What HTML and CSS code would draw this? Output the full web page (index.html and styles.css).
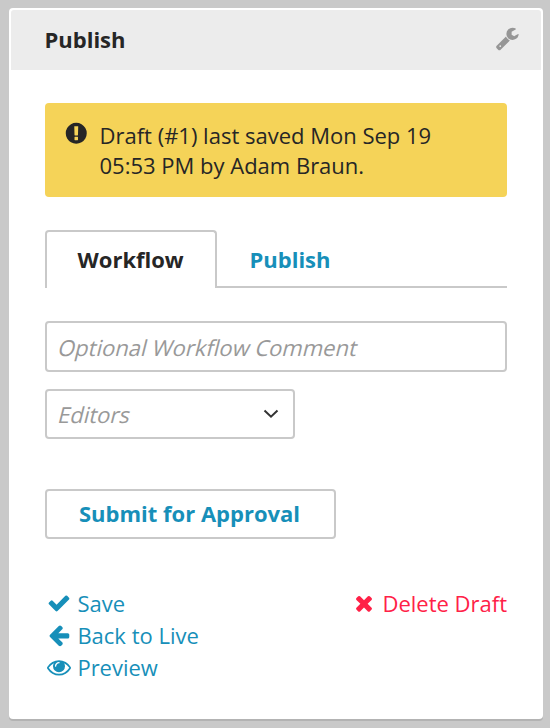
FILE: index.html
```html
<!DOCTYPE html>
<html lang="en">
<head>
<meta charset="utf-8">
<title>Publish</title>
<link rel="stylesheet" href="styles.css">
</head>
<body>
<section class="panel">
  <header class="panel-header">
    <h2 class="panel-title">Publish</h2>
    <svg class="icon icon-wrench" viewBox="0 0 1792 1792"><path d="M448 1472q0-26-19-45t-45-19-45 19-19 45 19 45 45 19 45-19 19-45zm644-420l-682 682q-37 37-90 37-52 0-91-37l-106-108q-38-36-38-90 0-53 38-91l681-681q39 98 114.500 173.500t173.500 114.500zm634-435q0 39-23 106-47 134-164.500 217.500t-258.500 83.500q-185 0-316.500-131.500t-131.500-316.500 131.500-316.500 316.500-131.500q58 0 121.500 16.500t107.500 46.500q16 11 16 28t-16 28l-293 169v224l193 107q5-3 79-48.500t135.500-81 70.500-35.500q15 0 23.500 10t8.500 25z"/></svg>
  </header>
  <div class="panel-body">
    <div class="notice">
      <svg class="icon icon-notice" viewBox="0 0 1792 1792"><path d="M896 128q209 0 385.500 103t279.500 279.500 103 385.500-103 385.500-279.500 279.500-385.500 103-385.500-103-279.500-279.500-103-385.500 103-385.500 279.500-279.500 385.500-103zm128 1247v-190q0-14-9-23.500t-22-9.500h-192q-13 0-23 10t-10 23v188q0 13 10 23t23 10h192q13 0 22-9.500t9-22.500zm-2-344l18-621q0-12-10-18-10-8-24-8h-220q-14 0-24 8-10 6-10 18l17 621q0 10 10 17.500t24 7.500h185q14 0 23.500-7.500t10.500-17.500z"/></svg>
      <p class="notice-text">Draft (#1) last saved Mon Sep 19<br>05:53 PM by Adam Braun.</p>
    </div>
    <nav class="tabs">
      <a class="tab tab-active">Workflow</a>
      <a class="tab">Publish</a>
    </nav>
    <div class="field comment"><span class="hint">Optional Workflow Comment</span></div>
    <div class="field select">
      <span class="hint">Editors</span>
      <svg class="chevron" viewBox="0 0 16 10"><path d="M1.500 1.500 8 7.700l6.500-6.200"/></svg>
    </div>
    <button class="submit" type="button">Submit for Approval</button>
    <div class="actions">
      <div class="action-list">
        <a class="action"><svg class="icon" viewBox="0 0 1792 1792"><path d="M1671 566q0 40-28 68l-724 724-136 136q-28 28-68 28t-68-28l-136-136-362-362q-28-28-28-68t28-68l136-136q28-28 68-28t68 28l294 295 656-657q28-28 68-28t68 28l136 136q28 28 28 68z"/></svg>Save</a>
        <a class="action"><svg class="icon" viewBox="0 0 1792 1792"><path d="M1664 896v128q0 53-32.500 90.500t-84.500 37.500h-704l293 294q38 36 38 90t-38 90l-75 76q-37 37-90 37-52 0-91-37l-651-652q-37-37-37-90 0-52 37-91l651-650q38-38 91-38 52 0 90 38l75 74q38 38 38 91t-38 91l-293 293h704q52 0 84.500 37.500t32.500 90.500z"/></svg>Back to Live</a>
        <a class="action"><svg class="icon" viewBox="0 0 1792 1792"><path d="M1664 960q-152-236-381-353 61 104 61 225 0 185-131.500 316.500t-316.500 131.500-316.500-131.500-131.500-316.500q0-121 61-225-229 117-381 353 133 205 333.500 326.500t434.500 121.500 434.500-121.500 333.500-326.500zm-720-384q0-20-14-34t-34-14q-125 0-214.500 89.500t-89.500 214.500q0 20 14 34t34 14 34-14 14-34q0-86 61-147t147-61q20 0 34-14t14-34zm848 384q0 34-20 69-140 230-376.500 368.500t-499.500 138.500-499.500-139-376.500-368q-20-35-20-69t20-69q140-229 376.500-368t499.500-139 499.500 139 376.500 368q20 35 20 69z"/></svg>Preview</a>
      </div>
      <a class="action action-delete"><svg class="icon" viewBox="0 0 1792 1792"><path d="M1490 1322q0 40-28 68l-136 136q-28 28-68 28t-68-28l-294-294-294 294q-28 28-68 28t-68-28l-136-136q-28-28-28-68t28-68l294-294-294-294q-28-28-28-68t28-68l136-136q28-28 68-28t68 28l294 294 294-294q28-28 68-28t68 28l136 136q28 28 28 68t-28 68l-294 294 294 294q28 28 28 68z"/></svg>Delete Draft</a>
    </div>
  </div>
</section>
</body>
</html>
```
FILE: styles.css
```css
* { box-sizing: border-box; }
body {
  margin: 0;
  padding: 8px 7px 0 9px;
  height: 728px;
  overflow: hidden;
  background: #c9c9c9;
  color: #262626;
  font: 22px/32px "Open Sans", "Noto Sans", sans-serif;
}
.panel {
  height: 711px;
  padding: 2px;
  background: #fff;
  border-radius: 4px;
  box-shadow: 0 2px 0 #b3b3b3;
}
.panel-header {
  display: flex;
  align-items: center;
  justify-content: space-between;
  height: 60px;
  padding: 0 22px 2px 33.5px;
  background: #ececec;
  border-radius: 3px 3px 0 0;
}
.panel-title { margin: 0; font-size: 22px; font-weight: 700; }
.icon { width: 24px; height: 24px; flex: none; fill: currentColor; }
.icon-wrench { width: 24.5px; height: 24.5px; color: #969696; margin-bottom: 1px; }
.panel-body { padding: 33px 34px 0; }
.notice {
  display: flex;
  height: 94px;
  padding: 17px 19px;
  gap: 11px;
  background: #f5d358;
  border-radius: 4px;
}
.icon-notice { width: 24.5px; height: 24.5px; margin-top: 1px; }
.notice-text { margin: 0; line-height: 30px; }
.tabs {
  display: flex;
  height: 58px;
  margin-top: 33px;
  background: linear-gradient(#c9c9c9, #c9c9c9) 0 56px / 100% 2px no-repeat;
  font-weight: 700;
}
.tab { padding: 13px 32.5px; color: #178fb9; }
.tab-active {
  width: 172px;
  padding: 11px 0 0 30.5px;
  color: #262626;
  background: #fff;
  border: 2px solid #c9c9c9;
  border-bottom: 0;
  border-radius: 4px 4px 0 0;
}
.field {
  display: flex;
  align-items: center;
  justify-content: space-between;
  border: 2px solid #c9c9c9;
  border-radius: 4px;
  background: #fff;
}
.hint {
  color: #999;
  transform: skewX(-14deg);
}
.comment {
  height: 51px;
  margin-top: 33px;
  padding: 0 11.7px;
}
.select {
  width: 250px;
  height: 50px;
  margin-top: 17px;
  padding: 0 14px 0 11.7px;
}
.chevron {
  width: 16px;
  height: 10px;
  fill: none;
  stroke: #333;
  stroke-width: 2;
}
.submit {
  display: block;
  width: 291px;
  height: 50px;
  margin-top: 50px;
  padding: 0 0 2px 32px;
  border: 2px solid #c9c9c9;
  border-radius: 4px;
  background: #fff;
  color: #178fb9;
  font: 700 22px/32px "Open Sans", "Noto Sans", sans-serif;
  text-align: left;
}
.actions {
  display: flex;
  align-items: flex-start;
  justify-content: space-between;
  margin-top: 48px;
}
.action-list { padding-left: 2px; }
.action {
  display: flex;
  align-items: center;
  gap: 6.4px;
  color: #178fb9;
}
.action-delete { gap: 6px; color: #ff2147; }
```
